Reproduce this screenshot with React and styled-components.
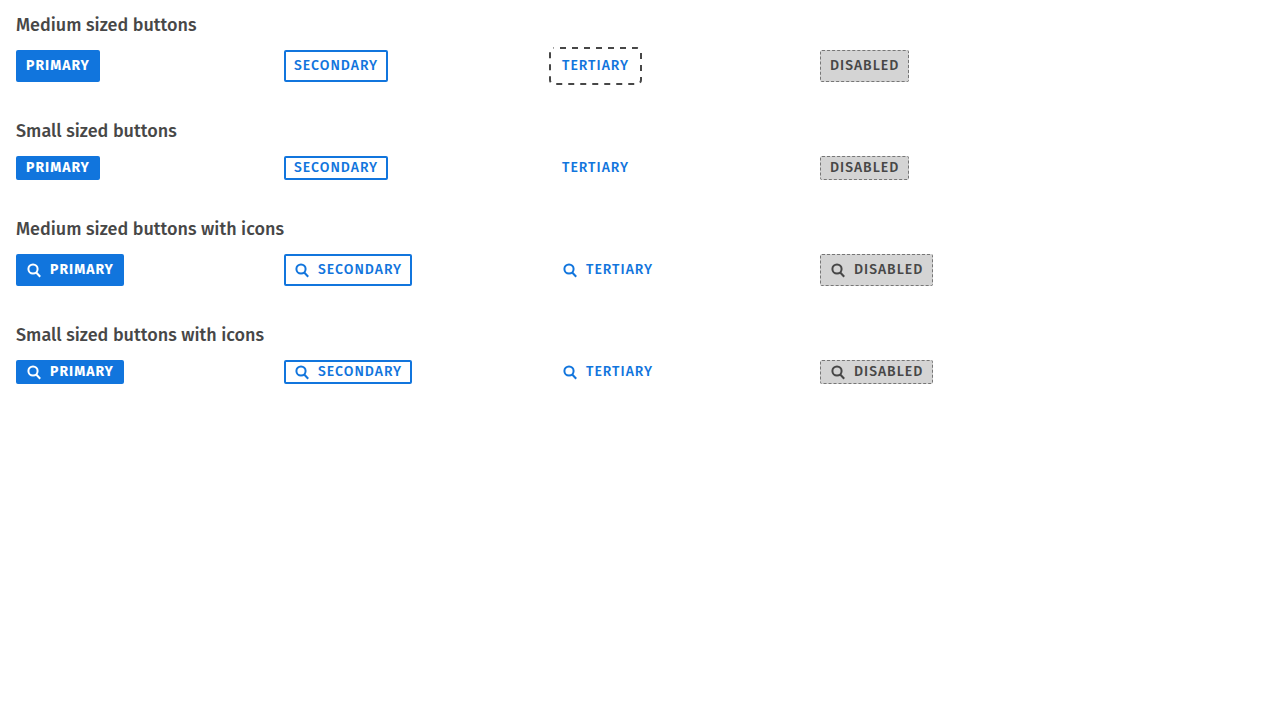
import React from 'react';
import styled, { createGlobalStyle, css } from 'styled-components';

const GlobalStyle = createGlobalStyle`
  *, *::before, *::after { box-sizing: border-box; }
  body {
    margin: 0;
    background: #ffffff;
    color: #474747;
    font-family: 'Fira Sans', 'Noto Sans', 'Open Sans', sans-serif;
    -webkit-font-smoothing: antialiased;
  }
`;

const Page = styled.main`
  display: flex;
  flex-direction: column;
  gap: 36px;
  padding: 12px 16px;
`;

const Group = styled.section`
  display: flex;
  flex-direction: column;
  gap: 12px;
`;

const Heading = styled.h2`
  margin: 0;
  font-size: 18px;
  line-height: 26px;
  font-weight: 500;
`;

const Row = styled.div`
  display: grid;
  grid-template-columns: repeat(4, minmax(0, 268px));
  justify-items: start;
`;

const FocusRing = styled.svg`
  display: none;
  position: absolute;
  top: -5px;
  left: -5px;
  width: calc(100% + 10px);
  height: calc(100% + 10px);
  pointer-events: none;

  rect {
    x: 1px;
    y: 1px;
    width: calc(100% - 2px);
    height: calc(100% - 2px);
    rx: 4px;
    fill: none;
    stroke: #474747;
    stroke-width: 2px;
    stroke-dasharray: 6 6;
    stroke-dashoffset: 6;
  }
`;

const variants = {
  primary: css`
    background: #1175dd;
    border: 2px solid #1175dd;
    color: #ffffff;
    font-weight: 700;
  `,
  secondary: css`
    background: #ffffff;
    border: 2px solid #1175dd;
    color: #1175dd;
  `,
  tertiary: css`
    background: transparent;
    border: 2px solid transparent;
    color: #1175dd;
  `,
  disabled: css`
    background: #d4d4d4;
    border: 1px dashed #767676;
    padding: 0 9px;
    color: #474747;
  `,
};

const Button = styled.button`
  position: relative;
  display: inline-flex;
  align-items: center;
  gap: 8px;
  height: ${({ $size }) => ($size === 'small' ? '24px' : '32px')};
  padding: 0 8px;
  border-radius: 2px;
  font-family: inherit;
  font-size: 14px;
  line-height: 20px;
  font-weight: 500;
  letter-spacing: 1px;
  text-transform: uppercase;
  white-space: nowrap;
  ${({ $variant }) => variants[$variant]}

  &:focus {
    outline: none;
  }

  &:focus > ${FocusRing} {
    display: block;
  }
`;

const Icon = styled.svg`
  flex: none;
  width: 16px;
  height: 16px;
`;

const SearchIcon = () => (
  <Icon viewBox="0 0 16 16" fill="none" stroke="currentColor" strokeWidth="2" aria-hidden="true">
    <circle cx="7" cy="7" r="4.6" />
    <path d="M10 10.3L14.2 14.8" />
  </Icon>
);

const kinds = ['primary', 'secondary', 'tertiary', 'disabled'];

const groups = [
  { title: 'Medium sized buttons', size: 'medium', focused: 'tertiary' },
  { title: 'Small sized buttons', size: 'small' },
  { title: 'Medium sized buttons with icons', size: 'medium', icon: true },
  { title: 'Small sized buttons with icons', size: 'small', icon: true },
];

export default function App() {
  return (
    <>
      <GlobalStyle />
      <Page>
        {groups.map(({ title, size, icon, focused }) => (
          <Group key={title}>
            <Heading>{title}</Heading>
            <Row>
              {kinds.map((kind) => (
                <Button
                  key={kind}
                  type="button"
                  $variant={kind}
                  $size={size}
                  disabled={kind === 'disabled'}
                  autoFocus={kind === focused}
                >
                  {icon && <SearchIcon />}
                  <span>{kind}</span>
                  <FocusRing aria-hidden="true">
                    <rect />
                  </FocusRing>
                </Button>
              ))}
            </Row>
          </Group>
        ))}
      </Page>
    </>
  );
}
